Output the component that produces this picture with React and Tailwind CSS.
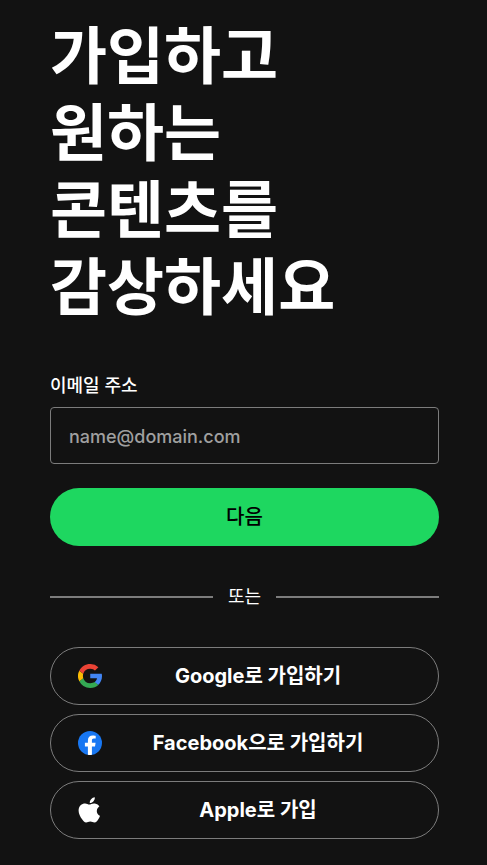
import React, { useState } from "react";

const GoogleIcon = () => (
  <svg className="w-6 h-6" viewBox="0 0 24 24" aria-hidden="true">
    <path
      fill="#4285F4"
      d="M24 12.27c0-.98-.08-1.7-.25-2.45H12.24v4.45H19c-.14 1.1-.87 2.77-2.5 3.89l3.63 2.81C22.6 18.76 24 15.8 24 12.27z"
    />
    <path
      fill="#34A853"
      d="M12.24 24c3.3 0 6.08-1.08 8.1-2.95l-3.85-2.97c-1.03.71-2.42 1.21-4.25 1.21a7.38 7.38 0 0 1-6.97-5.08l-4 3.09A12.24 12.24 0 0 0 12.24 24z"
    />
    <path
      fill="#FBBC05"
      d="M5.27 14.21a7.3 7.3 0 0 1-.02-4.42l-4-3.12a11.9 11.9 0 0 0 .02 10.64z"
    />
    <path
      fill="#EA4335"
      d="M12.24 4.73c2.3 0 3.84.98 4.73 1.8l3.45-3.34A11.77 11.77 0 0 0 12.24 0C7.45 0 3.31 2.73 1.27 6.69l3.98 3.1a7.41 7.41 0 0 1 6.99-5.06z"
    />
  </svg>
);

const FacebookIcon = () => (
  <svg className="w-6 h-6" viewBox="0 0 24 24" aria-hidden="true">
    <circle cx="12" cy="12" r="12" fill="#1877F2" />
    <path
      fill="#fff"
      d="M17 15.6l.6-3.8h-3.7V9.5c0-1.05.5-1.9 2-1.9h1.8V4.9s-1.5-.3-2.9-.3c-3 0-4.9 1.8-4.9 4.8v2.4H6.9v3.8h3v8.2a12.1 12.1 0 0 0 4 0v-8.2z"
    />
  </svg>
);

const AppleIcon = () => (
  <svg className="w-6 h-7" viewBox="0 0 24 28" aria-hidden="true">
    <path
      fill="#fff"
      d="M16.8 1.2c.2 1.5-.4 2.9-1.3 4-.9 1.1-2.3 1.900-3.700 1.800-.2-1.400.5-2.900 1.300-3.800.9-1.100 2.500-1.900 3.700-2zM21.400 10.400c-.2.100-2.600 1.600-2.600 4.500 0 3.500 3.100 4.800 3.200 4.900 0 .100-.5 1.800-1.700 3.500-1 1.500-2.100 3.200-3.800 3.200s-2.200-1-4.200-1-2.600 1-4.200 1c-1.600 0-2.800-1.500-4-3.200C2.400 21.100.6 17.700.6 14.700c0-4.900 3.200-7.200 6.500-7.200 1.700 0 3.100 1.100 4.200 1.100s2.700-1.200 4.700-1.200c.8 0 3.600.2 5.400 3z"
    />
  </svg>
);

const providers = [
  { name: "google", label: "Google로 가입하기", Icon: GoogleIcon },
  { name: "facebook", label: "Facebook으로 가입하기", Icon: FacebookIcon },
  { name: "apple", label: "Apple로 가입", Icon: AppleIcon },
];

const App = () => {
  const [email, setEmail] = useState("");

  const handleEmail = (e) => {
    setEmail(e.target.value);
  };

  const handleSubmit = (e) => {
    e.preventDefault();
  };

  return (
    <main className="min-h-screen bg-[#121212] text-white pl-[50px] pr-12 pt-[18px] pb-6 font-['Inter','Noto_Sans_CJK_KR',sans-serif]">
      <div className="w-full max-w-lg mx-auto">
        <h1 className="text-[62px] leading-[77px] font-bold">
          가입하고
          <br />
          원하는
          <br />
          콘텐츠를
          <br />
          감상하세요
        </h1>

        <form onSubmit={handleSubmit} className="mt-12">
          <label
            htmlFor="email"
            className="block text-lg leading-6 font-medium"
          >
            이메일 주소
          </label>
          <input
            id="email"
            type="email"
            value={email}
            onChange={handleEmail}
            placeholder="name@domain.com"
            className="block w-full h-[57px] mt-[9px] pt-0.5 px-[18px] text-lg font-medium rounded-sm border border-[#7c7c7c] bg-[#121212] placeholder:text-[#a0a0a0]"
          />
          <button
            type="submit"
            className="w-full h-[58px] mt-6 rounded-full bg-[#1ed760] text-black text-xl font-medium"
          >
            다음
          </button>
        </form>

        <div className="flex items-center gap-[15px] mt-9 mb-[35px] text-lg leading-[30px]">
          <span className="flex-1 h-0.5 bg-[#7c7c7c]" />
          또는
          <span className="flex-1 h-0.5 bg-[#7c7c7c]" />
        </div>

        <div className="flex flex-col gap-[9px]">
          {providers.map(({ name, label, Icon }) => (
            <button
              key={name}
              type="button"
              className="flex items-center w-full h-[58px] pl-[27px] pr-6 rounded-full border border-[#7c7c7c] text-xl font-bold"
            >
              <Icon />
              <span className="flex-1 text-center">{label}</span>
            </button>
          ))}
        </div>
      </div>
    </main>
  );
};

export default App;
